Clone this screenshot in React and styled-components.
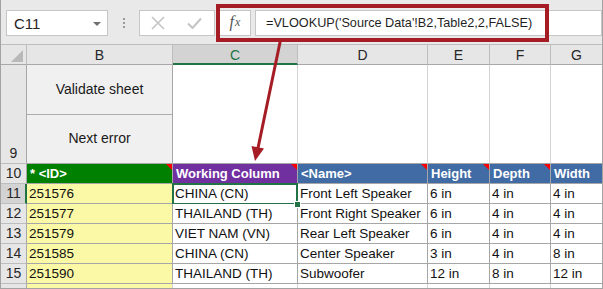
import styled, { createGlobalStyle, css } from "styled-components";

const GlobalStyle = createGlobalStyle`
  html, body {
    margin: 0;
    padding: 0;
    background: #fff;
  }
  body {
    font-family: "Liberation Sans", Arial, sans-serif;
  }
`;

const GREEN = "#217346";
const CALLOUT = "#a51c24";

const columns = [
  { key: "B", width: 146 },
  { key: "C", width: 125, selected: true },
  { key: "D", width: 130 },
  { key: "E", width: 62 },
  { key: "F", width: 61 },
  { key: "G", width: 51, last: true },
];

const headers = [
  { text: "* <ID>", fill: "#008000", note: true },
  { text: "Working Column", fill: "#7030a0", note: true },
  { text: "<Name>", fill: "#416ba4", note: true },
  { text: "Height", fill: "#416ba4", note: true },
  { text: "Depth", fill: "#416ba4", note: true },
  { text: "Width", fill: "#416ba4" },
];

const rows = [
  { n: 11, cells: ["251576", "CHINA (CN)", "Front Left Speaker", "6 in", "4 in", "4 in"] },
  { n: 12, cells: ["251577", "THAILAND (TH)", "Front Right Speaker", "6 in", "4 in", "4 in"] },
  { n: 13, cells: ["251579", "VIET NAM (VN)", "Rear Left Speaker", "6 in", "4 in", "4 in"] },
  { n: 14, cells: ["251585", "CHINA (CN)", "Center Speaker", "3 in", "4 in", "8 in"] },
  { n: 15, cells: ["251590", "THAILAND (TH)", "Subwoofer", "12 in", "8 in", "12 in"] },
];

const App = () => {
  return (
    <>
      <GlobalStyle />
      <Frame>
        <FormulaBar>
          <NameBox>
            <span>C11</span>
            <Caret />
          </NameBox>
          <Grip>
            <i />
            <i />
            <i />
          </Grip>
          <EditBox>
            <svg width="14" height="14" viewBox="0 0 14 14">
              <path d="M1 1 L13 13 M13 1 L1 13" stroke="#c4c4c4" strokeWidth="1.6" fill="none" />
            </svg>
            <svg width="15" height="12" viewBox="0 0 15 12">
              <path d="M1 6.5 L5.5 11 L14 1.5" stroke="#c4c4c4" strokeWidth="2" fill="none" />
            </svg>
          </EditBox>
          <FxBox>
            f<sub>x</sub>
          </FxBox>
          <FormulaInput>=VLOOKUP('Source Data'!B2,Table2,2,FALSE)</FormulaInput>
        </FormulaBar>

        <Sheet>
          <CornerHead>
            <SelectAll />
          </CornerHead>
          {columns.map((c) => (
            <ColHead key={c.key} selected={c.selected} last={c.last}>
              {c.key}
            </ColHead>
          ))}

          <RowHead>9</RowHead>
          <Cell edge="table">
            <ButtonStack>
              <SheetButton>Validate sheet</SheetButton>
              <SheetButton>Next error</SheetButton>
            </ButtonStack>
          </Cell>
          {columns.slice(1).map((c) => (
            <Cell key={c.key} edge="bottomOnly" last={c.last} />
          ))}

          <RowHead>10</RowHead>
          {headers.map((h, i) => (
            <HeadCell key={h.text} fill={h.fill} note={h.note} last={columns[i].last}>
              {h.text}
            </HeadCell>
          ))}

          {rows.map((r) => (
            <Row key={r.n} r={r} />
          ))}

          <RowHead edge="none" />
          {columns.map((c) => (
            <Cell key={c.key} edge="none" last={c.last} fill={c.key === "B" ? "#fbf8a6" : undefined} />
          ))}
        </Sheet>

        <Callout />
        <Arrow width="603" height="289" viewBox="0 0 603 289">
          <line x1="280.5" y1="40" x2="258" y2="148" stroke={CALLOUT} strokeWidth="3" />
          <polygon points="255,161 251.5,146 264,148.6" fill={CALLOUT} />
        </Arrow>
      </Frame>
    </>
  );
};

const Row = ({ r }) => (
  <>
    <RowHead selected={r.n === 11}>{r.n}</RowHead>
    {r.cells.map((v, i) => (
      <Cell
        key={i}
        edge="table"
        last={columns[i].last}
        fill={i === 0 ? "#fbf8a6" : undefined}
        active={r.n === 11 && i === 1}
      >
        {v}
      </Cell>
    ))}
  </>
);

export default App;

const Frame = styled.div`
  position: relative;
  width: 603px;
  height: 289px;
  box-sizing: border-box;
  border: 1px solid #a3a3a3;
  border-top: none;
  background: #e9e9e9;
  overflow: hidden;
`;

const FormulaBar = styled.div`
  height: 44px;
  box-sizing: border-box;
  padding: 10px 0 0 5px;
  display: flex;
  align-items: flex-start;
  background: #e9e9e9;
`;

const Box = styled.div`
  height: 26px;
  box-sizing: border-box;
  background: #fff;
  border: 1px solid #c6c6c6;
  display: flex;
  align-items: center;
`;

const NameBox = styled(Box)`
  width: 102px;
  padding: 0 6px 0 7px;
  justify-content: space-between;
  font-size: 15px;
  color: #262626;
`;

const Caret = styled.span`
  width: 0;
  height: 0;
  border-left: 4px solid transparent;
  border-right: 4px solid transparent;
  border-top: 4px solid #6f6f6f;
  margin-top: 1px;
`;

const Grip = styled.div`
  width: 31px;
  height: 26px;
  display: flex;
  flex-direction: column;
  align-items: center;
  justify-content: center;
  gap: 2px;

  > i {
    width: 2px;
    height: 2px;
    background: #9a9a9a;
  }
`;

const EditBox = styled(Box)`
  width: 76px;
  padding-left: 11px;
  gap: 22px;
`;

const FxBox = styled(Box)`
  width: 32px;
  margin-left: 4px;
  justify-content: center;
  font-family: "Liberation Serif", "Times New Roman", serif;
  font-style: italic;
  font-size: 16px;
  color: #555;
  padding-bottom: 2px;

  > sub {
    font-size: 12px;
    vertical-align: -1px;
    margin-left: 1px;
  }
`;

const FormulaInput = styled(Box)`
  flex: 1;
  margin-left: 4px;
  padding-left: 10px;
  font-size: 12.7px;
  color: #1f1f1f;
  white-space: nowrap;
`;

const Sheet = styled.div`
  display: grid;
  grid-template-columns: 26px ${columns.map((c) => `${c.width}px`).join(" ")};
  grid-template-rows: 20px 99px repeat(6, 20px) 4px;
  border-top: 1px solid #bdbdbd;
  background: #fff;
  font-size: 13.5px;
  color: #111;
`;

const HeadBase = css`
  box-sizing: border-box;
  background: #e6e6e6;
  color: #262626;
  border-right: 1px solid #bdbdbd;
  border-bottom: 1px solid #a8a8a8;
`;

const CornerHead = styled.div`
  ${HeadBase}
  display: flex;
  justify-content: flex-end;
  align-items: flex-end;
  padding: 0 3px 2px 0;
`;

const SelectAll = styled.span`
  width: 0;
  height: 0;
  border-left: 12px solid transparent;
  border-bottom: 12px solid #b9b9b9;
`;

const ColHead = styled.div`
  ${HeadBase}
  display: flex;
  align-items: center;
  justify-content: center;
  font-size: 14px;
  padding-top: 1px;
  ${(p) =>
    p.selected &&
    css`
      background: #d3d3d3;
      color: ${GREEN};
      border-bottom: 2px solid ${GREEN};
      padding-top: 2px;
    `}
  ${(p) => p.last && "border-right: none;"}
`;

const RowHead = styled.div`
  ${HeadBase}
  border-right: 1px solid #a8a8a8;
  border-bottom: 1px solid #bdbdbd;
  display: flex;
  align-items: flex-end;
  justify-content: center;
  font-size: 14px;
  line-height: 19px;
  ${(p) =>
    p.selected &&
    css`
      background: #d3d3d3;
      border-right: 2px solid ${GREEN};
      padding-left: 1px;
    `}
  ${(p) => p.edge === "none" && "border-bottom: none;"}
`;

const Cell = styled.div`
  position: relative;
  box-sizing: border-box;
  background: ${(p) => p.fill || "#fff"};
  border-right: 1px solid ${(p) => (p.edge === "table" ? "#a6a6a6" : "#d4d4d4")};
  border-bottom: 1px solid #a6a6a6;
  padding: 0 2px;
  line-height: 19px;
  white-space: nowrap;
  overflow: visible;
  ${(p) => p.edge === "none" && "border-bottom: none;"}
  ${(p) => p.last && "border-right: none;"}
  ${(p) =>
    p.active &&
    css`
      &::after {
        content: "";
        position: absolute;
        left: -1px;
        top: -1px;
        right: -1px;
        bottom: -2px;
        border: 2px solid ${GREEN};
        pointer-events: none;
      }
      &::before {
        content: "";
        position: absolute;
        right: -4px;
        bottom: -5px;
        width: 5px;
        height: 5px;
        background: ${GREEN};
        border: 1px solid #fff;
        z-index: 2;
      }
    `}
`;

const HeadCell = styled.div`
  position: relative;
  box-sizing: border-box;
  background: ${(p) => p.fill};
  color: #fff;
  font-weight: bold;
  font-size: 13px;
  border-right: 1px solid #a6a6a6;
  border-bottom: 1px solid #a6a6a6;
  padding: 0 3px;
  line-height: 19px;
  white-space: nowrap;
  ${(p) => p.last && "border-right: none;"}
  ${(p) =>
    p.note &&
    css`
      &::after {
        content: "";
        position: absolute;
        top: 0;
        right: 0;
        border-left: 6px solid transparent;
        border-top: 6px solid #ff0000;
      }
    `}
`;

const ButtonStack = styled.div`
  display: flex;
  flex-direction: column;
  height: 100%;
  margin: 0 -2px;
`;

const SheetButton = styled.div`
  flex: 1;
  display: flex;
  align-items: center;
  justify-content: center;
  background: #f0f0f0;
  color: #1a1a1a;
  font-size: 14px;
  & + & {
    border-top: 1px solid #adadad;
  }
`;

const Callout = styled.div`
  position: absolute;
  left: 215px;
  top: 4px;
  width: 333px;
  height: 38px;
  box-sizing: border-box;
  border: 4px solid ${CALLOUT};
  pointer-events: none;
`;

const Arrow = styled.svg`
  position: absolute;
  left: -1px;
  top: 0;
  pointer-events: none;
`;
